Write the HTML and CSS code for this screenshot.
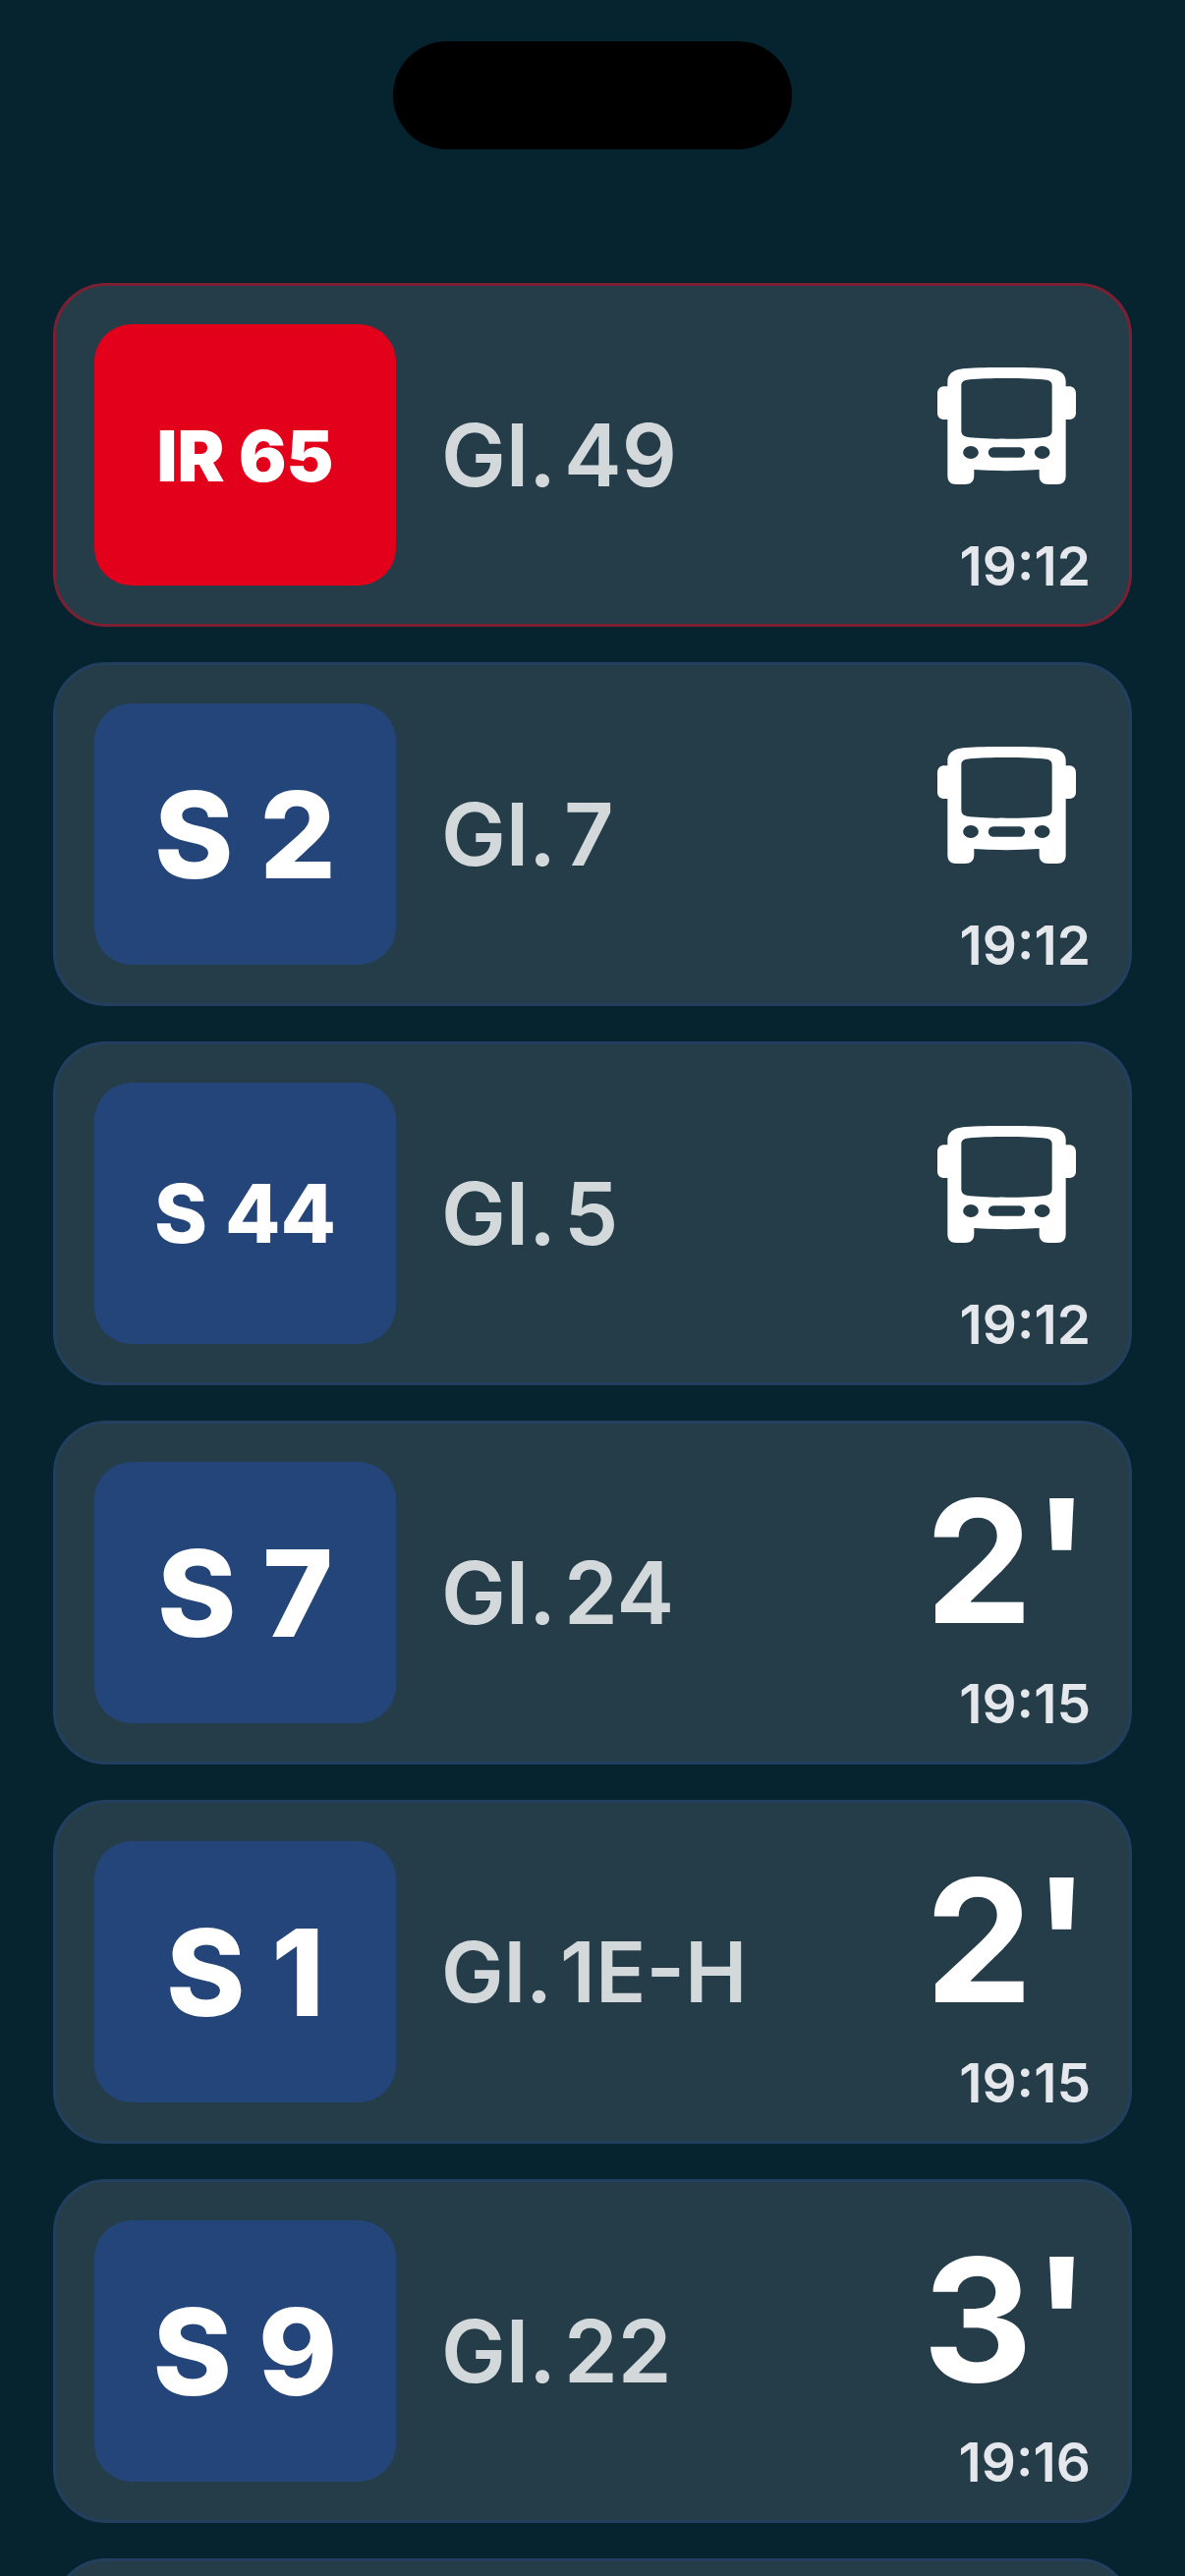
FILE: index.html
```html
<!DOCTYPE html>
<html lang="de">
<head>
    <meta charset="UTF-8">
    <meta name="viewport" content="width=device-width, initial-scale=1.0">
    <title>Abfahrten</title>
    <link rel="stylesheet" href="styles.css">
</head>
<body>

    <!-- Bus symbol, reused by departures that leave now -->
    <svg class="symbols" aria-hidden="true">
        <symbol id="bus" viewBox="0 0 423 357">
            <path fill-rule="evenodd" d="M31 58V42C31 20 49 8 70 5C120 -2 302 -2 352 5C374 8 392 20 392 42V58H401C415 58 423 66 423 80V138C423 152 415 159 401 159H392V330C392 348 383 357 365 357H339C321 357 311 348 311 330V312Q211 319 112 312V330C112 348 102 357 84 357H58C40 357 31 348 31 330V159H22C8 159 0 152 0 138V80C0 66 8 58 22 58ZM73 56V192C73 204 78 209 90 212C140 220 283 220 333 212C345 209 350 204 350 192V56C350 45 345 40 333 38C283 31 140 31 90 38C78 40 73 45 73 56ZM102 240A23 19 0 1 0 102 279A23 19 0 1 0 102 240ZM171 244A15 15 0 0 0 171 275H252A15 15 0 0 0 252 244ZM320 240A23 19 0 1 0 320 279A23 19 0 1 0 320 240Z"/>
        </symbol>
    </svg>

    <!-- Top -->
    <header class="header">
        <div class="island"></div>
    </header>

    <!-- Departures -->
    <main class="departures">
        <article class="card card-ir">
            <div class="line line-small">IR 65</div>
            <div class="track"><span>Gl.</span> <span>49</span></div>
            <div class="departure">
                <div class="countdown"><svg class="bus" role="img" aria-label="Jetzt"><use href="#bus"/></svg></div>
                <time class="time">19:12</time>
            </div>
        </article>
        <article class="card">
            <div class="line">S 2</div>
            <div class="track"><span>Gl.</span> <span>7</span></div>
            <div class="departure">
                <div class="countdown"><svg class="bus" role="img" aria-label="Jetzt"><use href="#bus"/></svg></div>
                <time class="time">19:12</time>
            </div>
        </article>
        <article class="card">
            <div class="line line-medium">S 44</div>
            <div class="track"><span>Gl.</span> <span>5</span></div>
            <div class="departure">
                <div class="countdown"><svg class="bus" role="img" aria-label="Jetzt"><use href="#bus"/></svg></div>
                <time class="time">19:12</time>
            </div>
        </article>
        <article class="card">
            <div class="line">S 7</div>
            <div class="track"><span>Gl.</span> <span>24</span></div>
            <div class="departure">
                <div class="countdown">2'</div>
                <time class="time">19:15</time>
            </div>
        </article>
        <article class="card">
            <div class="line">S 1</div>
            <div class="track track-long"><span>Gl.</span> <span>1E-H</span></div>
            <div class="departure">
                <div class="countdown">2'</div>
                <time class="time">19:15</time>
            </div>
        </article>
        <article class="card">
            <div class="line">S 9</div>
            <div class="track"><span>Gl.</span> <span>22</span></div>
            <div class="departure">
                <div class="countdown">3'</div>
                <time class="time">19:16</time>
            </div>
        </article>
        <article class="card"></article>
    </main>

</body>
</html>
```
FILE: styles.css
```css
* {
    margin: 0;
    padding: 0;
    box-sizing: border-box;
}

body {
    height: 100vh;
    overflow: hidden;
    background-color: #052430;
    color: white;
    font-family: Inter, sans-serif;
}

.symbols {
    display: none;
}

.header {
    height: 288px;
    padding-top: 42px;
}

.island {
    width: 406px;
    height: 110px;
    margin: 0 auto;
    border-radius: 55px;
    background-color: black;
}

.departures {
    display: flex;
    flex-direction: column;
    gap: 36px;
    padding: 0 54px;
}

.card {
    display: flex;
    flex-shrink: 0;
    align-items: center;
    gap: 46px;
    min-height: 350px;
    padding: 39px;
    border: 3px solid #233f5f;
    border-radius: 54px;
    background-color: #253d49;
}

.card-ir {
    border-color: #7b2032;
}

.line {
    display: flex;
    justify-content: center;
    align-items: center;
    width: 307px;
    height: 266px;
    border-radius: 38px;
    background-color: #24457a;
    font-size: 122px;
    font-weight: 800;
}

.line-medium {
    font-size: 82px;
}

.line-small {
    font-size: 72px;
    font-weight: 900;
}

.card-ir .line {
    background-color: #e3001b;
}

.track {
    display: flex;
    flex: 1;
    gap: 8px;
    color: #d3d8da;
    font-size: 88px;
    font-weight: 600;
}

.track-long {
    font-size: 85px;
}

.departure {
    display: flex;
    flex-direction: column;
    align-self: stretch;
    gap: 24px;
}

.countdown {
    display: flex;
    flex: 1;
    justify-content: flex-end;
    align-items: center;
    font-size: 174px;
    font-weight: 700;
    line-height: 200px;
}

.bus {
    width: 141px;
    height: 119px;
    margin: 4px 15px 0 0;
    fill: white;
}

.time {
    color: #e4e7eb;
    font-size: 55px;
    font-weight: 600;
    line-height: 40px;
    text-align: right;
}
```
